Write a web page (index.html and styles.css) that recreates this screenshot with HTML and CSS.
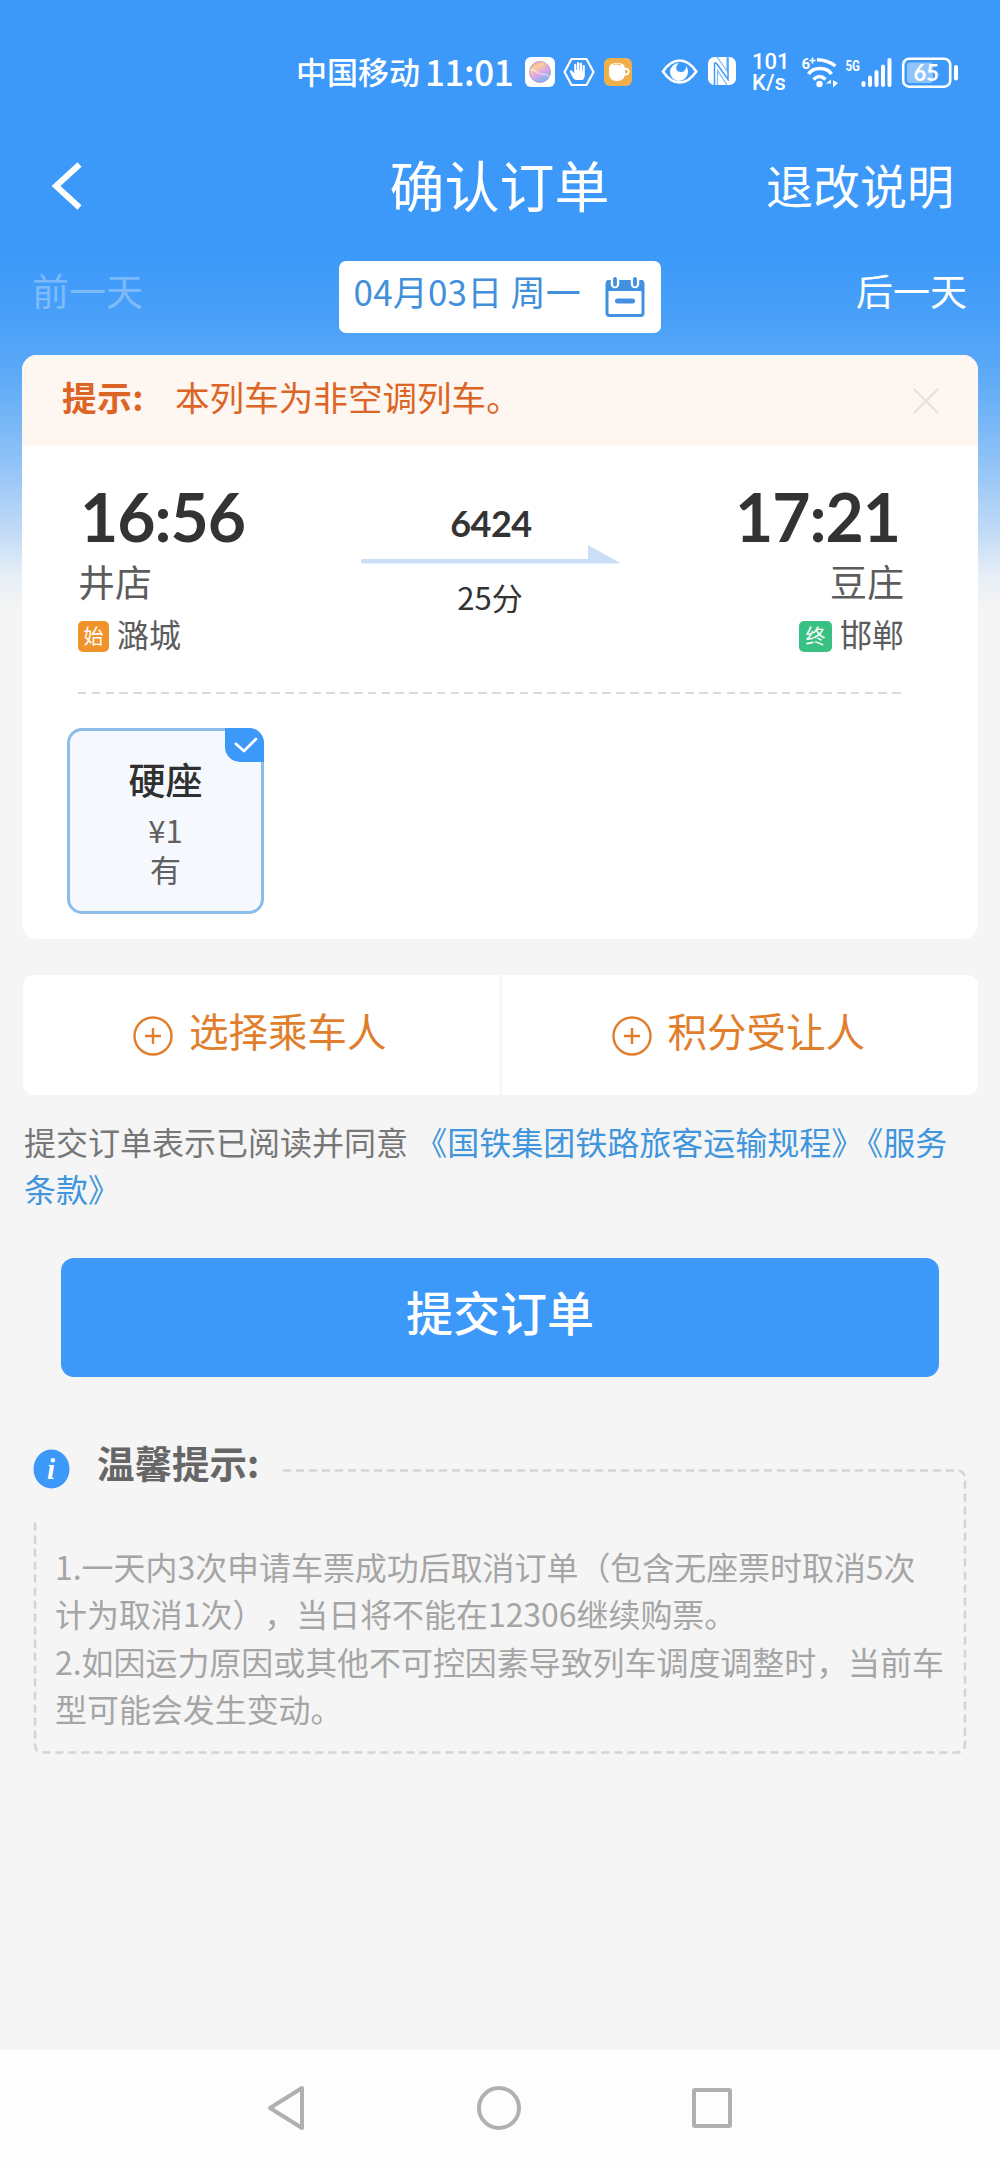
FILE: index.html
```html
<!DOCTYPE html>
<html lang="zh-CN">
<head>
<meta charset="utf-8">
<title>确认订单</title>
<link rel="stylesheet" href="styles.css">
</head>
<body>
<div class="screen">
  <div class="status">
    <span class="carrier">中国移动</span>
    <span class="clock">11:01</span>
    <svg class="st-icons" width="112" height="34" viewBox="522 56 112 34">
      <defs>
        <linearGradient id="ball" x1="0" y1="0" x2=".6" y2="1">
          <stop offset="0" stop-color="#f08cc8"/><stop offset=".35" stop-color="#f9cf98"/>
          <stop offset=".6" stop-color="#e3a8e0"/><stop offset="1" stop-color="#7db4f5"/>
        </linearGradient>
      </defs>
      <rect x="525" y="58" width="30" height="30" rx="6" fill="#fff"/>
      <circle cx="540" cy="73" r="10.500" fill="url(#ball)" stroke="#a98fc0" stroke-width=".8"/>
      <path d="M530 71c4-2 7 4 11 4s5 0 9 3" fill="none" stroke="#fff" stroke-width="1.400" opacity=".5"/>
      <path d="M571.500 60h15l7 13-7 13h-15l-7-13z" fill="none" stroke="#fff" stroke-width="2.200" stroke-linejoin="round"/>
      <path d="M573 79l-3-6c-.8-1.600 1-2.600 2-1.200l2.200 2.400v-8.200c0-1.800 2.200-1.800 2.200 0v5h.6v-6.600c0-1.800 2.300-1.800 2.300 0v6.600h.6v-6c0-1.800 2.200-1.800 2.200 0v6.400h.6v-4.200c0-1.700 2.100-1.700 2.100 0v8.800c0 3-1.500 5-3 5h-4.800c-1.800 0-3-.8-4-2z" fill="#fff"/>
      <rect x="604" y="59" width="28" height="28" rx="6" fill="#efb04c"/>
      <path d="M609 68h16v6c0 5-3 8-8 8s-8-3-8-8z" fill="#fff"/>
      <path d="M625 70h1.500c3 0 3 5-.5 5.500h-2" fill="none" stroke="#fff" stroke-width="1.800"/>
      <ellipse cx="617" cy="67" rx="7.500" ry="3" fill="#fff"/>
      <path d="M613 66.500c1-1.500 6-2 8 0" fill="none" stroke="#efb04c" stroke-width="1"/>
    </svg>
    <svg class="st-eye" width="80" height="34" viewBox="660 56 80 34">
      <path d="M663 72.500c5-7.500 11-11 16.700-11s11.500 3.500 16.500 11c-5 7.500-11 11-16.500 11s-11.700-3.500-16.700-11z" fill="none" stroke="#fff" stroke-width="2.600"/>
      <path d="M679 64a9 9 0 1 0 9 9c0-2.500-.8-4.500-2-6 0 4-2 6-5 6-4 0-5.500-3-4.500-5.500.5-1.500 1.500-2.500 2.500-3.500z" fill="#fff"/>
      <rect x="708" y="58" width="28" height="28" rx="6.500" fill="#fff"/>
      <path d="M714.500 86V66q0-4 2.500-1l11 15.500V58.500" fill="none" stroke="#3c99f9" stroke-width="1.500"/>
      <path d="M717 58l10 14V58M727 86l-9.500-14.500V86" fill="none" stroke="#3c99f9" stroke-width="1.200" opacity=".7"/>
    </svg>
    <div class="speed"><span>101</span><span>K/s</span></div>
    <svg class="st-net" width="168" height="40" viewBox="798 52 168 40">
      <g fill="none" stroke="#fff" stroke-width="3.400">
        <path d="M817 59.800q10 0 18.500 6.200"/>
        <path d="M808.500 74q3.500-5.500 11.500-5.500t11.500 5.500"/>
        <path d="M813.500 79.500q5.800-6 12 0"/>
      </g>
      <circle cx="819.500" cy="84" r="3.200" fill="#fff"/>
      <path d="M826 83.500h5v-4zM833 80v7.500l5-4.500z" fill="#fff"/>
      <text class="tiny" x="801.500" y="69">6</text>
      <path d="M809.500 60.500h6M812.500 57.500v6" stroke="#fff" stroke-width="1.600"/>
      <text class="tiny" x="845.500" y="71" textLength="14.500" lengthAdjust="spacingAndGlyphs">5G</text>
      <g fill="#fff">
        <rect x="861.500" y="81" width="4" height="6" rx="2"/><rect x="868" y="75.500" width="4" height="11.500" rx="2"/>
        <rect x="874.500" y="70" width="4" height="17" rx="2"/><rect x="881" y="64.500" width="4" height="22.500" rx="2"/>
        <rect x="887.500" y="58" width="4" height="29" rx="2"/>
      </g>
      <rect x="903.200" y="58.700" width="47" height="28" rx="6" fill="none" stroke="#fff" stroke-width="2.600"/>
      <rect x="907" y="62.500" width="26" height="20.500" rx="3" fill="#8ec4fb"/>
      <rect x="954" y="65" width="4" height="15.500" rx="2" fill="#fff"/>
      <text class="pct" x="913.500" y="80.500">65</text>
    </svg>
  </div>

  <header class="header">
    <svg class="back" width="34" height="48" viewBox="50 162 34 48"><path d="M79.500 164.500 56 186l23.500 21.500" fill="none" stroke="#fff" stroke-width="6"/></svg>
    <h1 class="title">确认订单</h1>
    <a class="rules">退改说明</a>
  </header>

  <div class="days">
    <span class="prev">前一天</span>
    <div class="date">
      <span class="date-text">04月03日 周一</span>
      <svg width="40" height="40" viewBox="0 0 40 40">
        <rect x="2" y="4.500" width="36" height="34" rx="2.500" fill="#fff" stroke="#4290e0" stroke-width="3"/>
        <path d="M1 6q0-3 3-3h32q3 0 3 3v8H1z" fill="#4290e0"/>
        <path d="M10 2v5M30 2v5" stroke="#fff" stroke-width="8.500" stroke-linecap="round"/>
        <path d="M10 2v5.500M30 2v5.500" stroke="#4290e0" stroke-width="3.800" stroke-linecap="round"/>
        <path d="M12.500 24h15" stroke="#4290e0" stroke-width="5" stroke-linecap="round"/>
      </svg>
    </div>
    <span class="next">后一天</span>
  </div>

  <section class="card">
    <div class="notice">
      <b>提示:</b><span>本列车为非空调列车。</span>
      <svg width="26" height="26" viewBox="0 0 26 26"><path d="M1 1l24 24M25 1 1 25" stroke="#e6e1dc" stroke-width="2.400"/></svg>
    </div>
    <div class="trip">
      <div class="stop">
        <div class="time">16:56</div>
        <div class="station">井店</div>
        <div class="end"><i class="tag start">始</i><span>潞城</span></div>
      </div>
      <div class="route">
        <div class="train">6424</div>
        <svg width="260" height="20" viewBox="0 0 260 20"><path d="M2 14h225V0l33 18.500H2a2 2 0 0 1 0-4.500z" fill="#cadff7"/></svg>
        <div class="dur">25分</div>
      </div>
      <div class="stop right">
        <div class="time">17:21</div>
        <div class="station">豆庄</div>
        <div class="end"><i class="tag final">终</i><span>邯郸</span></div>
      </div>
    </div>
    <div class="rule"></div>
    <div class="seat">
      <span class="check"><svg width="24" height="17" viewBox="0 0 24 17"><path d="M2 7l8 7L22 2" fill="none" stroke="#fff" stroke-width="2.800" stroke-linecap="round" stroke-linejoin="round"/></svg></span>
      <div class="seat-name">硬座</div>
      <div class="seat-price">¥1</div>
      <div class="seat-left">有</div>
    </div>
  </section>

  <section class="people">
    <div class="pick">
      <svg width="40" height="40" viewBox="0 0 40 40"><circle cx="20" cy="20" r="18.500" /><path d="M20 12v16M12 20h16"/></svg>
      <span>选择乘车人</span>
    </div>
    <div class="pick">
      <svg width="40" height="40" viewBox="0 0 40 40"><circle cx="20" cy="20" r="18.500" /><path d="M20 12v16M12 20h16"/></svg>
      <span>积分受让人</span>
    </div>
  </section>

  <p class="agree">提交订单表示已阅读并同意 <a>《国铁集团铁路旅客运输规程<span class="tight">》</span>《服务<br>条款》</a></p>

  <button class="submit">提交订单</button>

  <section class="tips">
    <div class="tips-head">
      <svg width="37" height="40" viewBox="0 0 37 40"><ellipse cx="18.500" cy="20" rx="18" ry="19.500" fill="#3c99f9"/><text class="info" x="14" y="30">i</text></svg>
      <h2>温馨提示:</h2>
    </div>
    <svg class="frame" width="936" height="290" viewBox="0 0 936 290">
      <path d="M250 4.500H924q8 0 8 9V277.500q0 9-8 9H10q-8 0-8-9V52" fill="none" stroke="#d4d4d4" stroke-width="2.600" stroke-dasharray="8 5"/>
    </svg>
    <div class="tips-text">1.一天内3次申请车票成功后取消订单（包含无座票时取消5次<br>计为取消1次），当日将不能在12306继续购票。<br>2.如因运力原因或其他不可控因素导致列车调度调整时，当前车<br>型可能会发生变动。</div>
  </section>

  <nav class="nav">
    <svg width="40" height="46" viewBox="0 0 40 46"><path d="M36 3v40L4 23z" /></svg>
    <svg width="46" height="46" viewBox="0 0 46 46"><circle cx="23" cy="23" r="20"/></svg>
    <svg width="40" height="46" viewBox="0 0 40 46"><rect x="2" y="5" width="36" height="36" rx="1"/></svg>
  </nav>
</div>
</body>
</html>
```
FILE: styles.css
```css
* { box-sizing: border-box; }
body {
  margin: 0;
  font-family: "Noto Sans CJK SC", sans-serif;
  text-spacing-trim: space-all;
}
.screen {
  width: 1000px;
  height: 2166px;
  display: flex;
  flex-direction: column;
  background: #f5f5f5 linear-gradient(#3c99f9 0 255px, #4ca1f8 330px, #5fabf7 380px, #8fc2f7 460px, #c0daf6 530px, #e6eef6 575px, #f5f5f5 610px) no-repeat;
  overflow: hidden;
}
svg { display: block; flex: none; }

.status {
  height: 114px;
  padding: 30px 0 0 296px;
  display: flex;
  align-items: center;
  color: #fff;
  white-space: nowrap;
}
.carrier { width: 129px; font-size: 31px; line-height: 40px; padding-bottom: 2px; font-weight: 500; }
.clock { width: 97px; font-size: 35px; line-height: 40px; padding-bottom: 2px; letter-spacing: -.4px; font-weight: 500; }
.st-eye { margin-left: 26px; }
.speed {
  width: 58px;
  padding-left: 12px;
  display: flex;
  flex-direction: column;
  font: 500 22px/21px Roboto, sans-serif;
}
.tiny { font: 700 15px Roboto, sans-serif; fill: #fff; }
.pct { font: 700 22px Lato, sans-serif; fill: #fff; }

.header {
  height: 144px;
  padding: 0 46px 0 50px;
  display: grid;
  grid-template-columns: 1fr auto 1fr;
  align-items: center;
  color: #fff;
}
.title { margin: 0 5px 0 0; padding-bottom: 6px; font-size: 55px; line-height: 60px; font-weight: 400; }
.rules { justify-self: end; padding-bottom: 4px; font-size: 47px; line-height: 60px; }

.days {
  height: 97px;
  padding: 3px 33px 22px 32px;
  display: grid;
  grid-template-columns: 1fr 322px 1fr;
  color: #fff;
  font-size: 37px;
  line-height: 58px;
}
.prev { opacity: .3; }
.next { text-align: right; }
.date {
  height: 72px;
  padding: 0 16px 0 15px;
  display: flex;
  align-items: center;
  justify-content: space-between;
  background: #fff;
  border-radius: 7px;
  color: #4290dc;
}
.date-text { font-size: 35px; line-height: 64px; padding-bottom: 12px; white-space: nowrap; letter-spacing: .2px; }

.card {
  height: 584px;
  margin: 0 22px;
  background: #fff;
  border-radius: 15px;
  overflow: hidden;
}
.notice {
  height: 91px;
  padding: 0 39px 0 40px;
  display: flex;
  align-items: center;
  background: #fdf6f1;
  color: #dc6526;
  font-size: 34.600px;
  line-height: 50px;
}
.notice b { width: 113px; padding-bottom: 9px; letter-spacing: .6px; }
.notice span { flex: 1; padding-bottom: 9px; }
.trip {
  height: 244px;
  padding: 38px 75px 0 56px;
  display: grid;
  grid-template-columns: 283px 260px 1fr;
  color: #333;
}
.time { font: 700 66px/66px Lato, sans-serif; padding-left: 2px; letter-spacing: -1px; }
.station { margin-top: 6px; font-size: 37px; line-height: 50px; color: #5c5c5c; }
.end { display: flex; align-items: center; gap: 8px; height: 54px; font-size: 32px; line-height: 46px; color: #5c5c5c; }
.tag {
  width: 31px;
  height: 31px;
  margin-top: 6px;
  border-radius: 5px;
  color: #fff;
  font-size: 20px;
  line-height: 29px;
  font-style: normal;
  text-align: center;
}
.start { background: #f0932b; }
.final { background: #38c182; width: 33px; }
.right { text-align: right; margin-right: -1px; }
.right .time { padding-right: 4px; }
.right .end { justify-content: flex-end; }
.route { display: flex; flex-direction: column; align-items: center; }
.train { font: 700 36px/40px Lato, sans-serif; padding-top: 19px; height: 61px; letter-spacing: -.5px; }
.dur { font-size: 31px; line-height: 50px; margin: 7px 2px 0 0; }
.rule {
  height: 2px;
  margin: 2px 75px 0 56px;
  background: repeating-linear-gradient(90deg, #dadada 0 8.500px, transparent 8.500px 13.800px);
}
.seat {
  position: relative;
  width: 197px;
  height: 186px;
  margin: 34px 0 0 45px;
  padding-top: 22px;
  border: 3px solid #8bbde8;
  border-radius: 15px;
  background: #f5f9fe;
  text-align: center;
  color: #606060;
}
.seat-name { font-size: 37px; line-height: 52px; font-weight: 500; color: #303030; }
.seat-price { font-size: 31px; line-height: 50px; }
.seat-left { font-size: 31px; line-height: 28px; }
.check {
  position: absolute;
  top: -3px;
  right: -3px;
  width: 39px;
  height: 34px;
  padding: 9px 0 0 9px;
  background: #3c99f9;
  border-radius: 0 15px 0 15px;
}

.people {
  height: 120px;
  margin: 36px 22px 0 23px;
  display: flex;
  background: #fff;
  border-radius: 11px;
}
.pick {
  flex: 1;
  display: flex;
  justify-content: center;
  gap: 16px;
  padding: 41px 3px 0 0;
  color: #e07e2c;
  font-size: 39.500px;
}
.pick span { margin-top: -16px; line-height: 60px; }
.pick + .pick { border-left: 2px solid #f5f5f5; }
.pick svg { fill: none; stroke: #e07e2c; stroke-width: 2.400; }

.agree {
  margin: 23px 0 0 24px;
  height: 140px;
  font-size: 32px;
  line-height: 47px;
  color: #777;
  white-space: nowrap;
}
.agree a { color: #4095dc; }
.tight { letter-spacing: -12px; }

.submit {
  height: 119px;
  margin: 0 61px;
  padding: 0 0 15px;
  border: 0;
  border-radius: 13px;
  background: #3c99f9;
  color: #fff;
  font-family: inherit;
  font-size: 47px;
  font-weight: 500;
}

.tips { display: grid; margin: 56px 33px 0; height: 330px; grid-template-rows: 330px; }
.tips > * { grid-area: 1 / 1; }
.tips-head { display: flex; gap: 27px; padding-top: 16px; }
.tips-head h2 { margin: -15px 0 0; font-size: 37.500px; line-height: 56px; font-weight: 700; color: #666; }
.info { font: italic 700 29px "Liberation Serif", serif; fill: #fff; }
.frame { margin-top: 33px; }
.tips-text {
  padding: 110px 0 0 22px;
  font-size: 31.950px;
  line-height: 47.400px;
  color: #a5a5a5;
  white-space: nowrap;
}

.nav {
  margin-top: auto;
  height: 116px;
  padding: 35px 268px 0 266px;
  display: flex;
  justify-content: space-between;
  background: #fdfdfd;
}
.nav svg { fill: none; stroke: #b0b0b0; stroke-width: 4; stroke-linejoin: round; }
```
